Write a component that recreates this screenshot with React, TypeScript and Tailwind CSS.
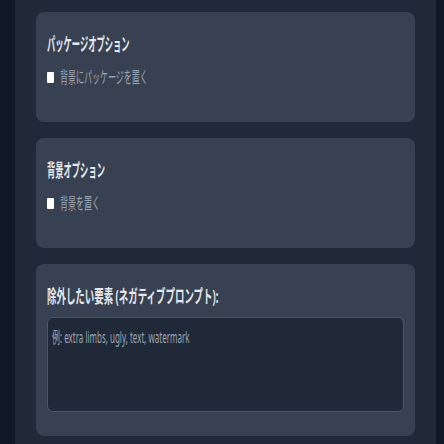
const FONT = "font-['Noto_Sans','Noto_Sans_CJK_JP',sans-serif]";

function Squeezed({ children, className = "" }: { children: React.ReactNode; className?: string }) {
  return (
    <span className={`inline-block origin-left whitespace-nowrap ${className}`}>
      {children}
    </span>
  );
}

function CheckOption({ label }: { label: string }) {
  return (
    <label className="flex h-5 items-center gap-[6px]">
      <span className="h-[11px] w-[7px] rounded-[1px] bg-white" />
      <Squeezed className="scale-x-[0.5] text-base leading-5 text-[#9ca3af]">{label}</Squeezed>
    </label>
  );
}

function OptionCard({ title, option }: { title: string; option: string }) {
  return (
    <section className="rounded-lg bg-[#374151] px-[11px] pb-[35px] pt-5">
      <h2 className="h-6">
        <Squeezed className="scale-x-[0.46] text-lg font-bold leading-6 text-[#e5e7eb]">{title}</Squeezed>
      </h2>
      <div className="mt-[11px]">
        <CheckOption label={option} />
      </div>
    </section>
  );
}

export default function App() {
  return (
    <div className={`flex h-[444px] w-[444px] overflow-hidden bg-[#111827] ${FONT}`}>
      <main className="ml-[15px] flex w-[421px] flex-col gap-4 bg-[#1f2937] px-[21px] pt-3">
        <OptionCard title="パッケージオプション" option="背景にパッケージを置く" />
        <OptionCard title="背景オプション" option="背景を置く" />

        <section className="rounded-lg bg-[#374151] px-[11px] pb-6 pt-5">
          <h2 className="h-6">
            <Squeezed className="scale-x-[0.525] text-lg font-bold leading-6 text-[#e5e7eb]">
              除外したい要素 (ネガティブプロンプト):
            </Squeezed>
          </h2>
          <div className="relative mt-[9px]">
            <textarea
              aria-label="除外したい要素"
              className="block h-[95px] w-full resize-none rounded-md border border-[#4b5563] bg-[#1f2937] outline-none"
            />
            <span className="pointer-events-none absolute left-[5px] top-[8px]">
              <Squeezed className="scale-x-[0.5] text-base leading-5 text-[#9ca3af]">
                例: extra limbs, ugly, text, watermark
              </Squeezed>
            </span>
          </div>
        </section>
      </main>
    </div>
  );
}
